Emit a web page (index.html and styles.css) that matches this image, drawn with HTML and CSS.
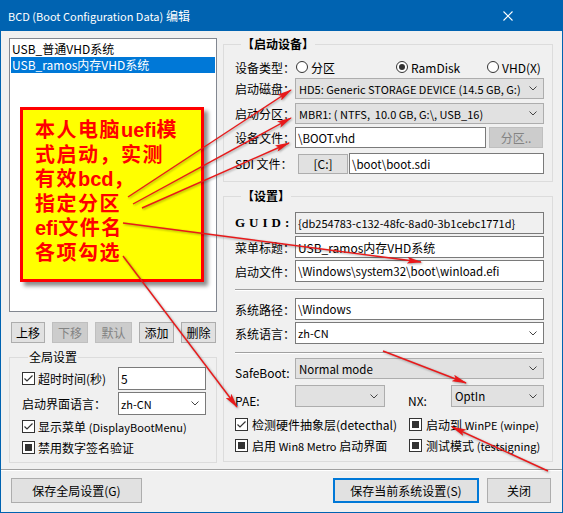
FILE: index.html
```html
<!DOCTYPE html>
<html>
<head>
<meta charset="utf-8">
<title>BCD</title>
<link rel="stylesheet" href="styles.css">
</head>
<body>
<div class="window">
  <div class="titlebar">
    <span class="title"><span class="en">BCD (Boot Configuration Data)</span> 编辑</span>
    <svg class="close" width="10" height="10" viewBox="0 0 10 10"><path d="M0.5 0.5L9.5 9.5M9.5 0.5L0.5 9.5" stroke="#fff" stroke-width="1.1"/></svg>
  </div>
  <div class="client">
    <div class="main">
      <div class="leftcol">
        <div class="listbox">
          <div class="item">USB_普通VHD系统</div>
          <div class="item sel">USB_ramos内存VHD系统</div>
        </div>
        <div class="btnrow">
          <div class="btn b1">上移</div>
          <div class="btn dis b2">下移</div>
          <div class="btn dis b3">默认</div>
          <div class="btn b4">添加</div>
          <div class="btn b5">删除</div>
        </div>
        <fieldset class="group gglobal">
          <legend>全局设置</legend>
          <div class="row gr1">
            <div class="glbl"><span class="chk on"><svg width="11" height="11" viewBox="0 0 11 11"><path d="M1.5 5.5L4 8L9.5 2.5" stroke="#333" stroke-width="1.2" fill="none"/></svg></span><span>超时时间(秒)</span></div>
            <div class="tb fill">5</div>
          </div>
          <div class="row gr2">
            <div class="glbl lbltext">启动界面语言：</div>
            <div class="combo ed fill"><span class="en">zh-CN</span><svg class="chev" width="8" height="5" viewBox="0 0 8 5"><polyline points="0.5,0.5 4,4 7.5,0.5" stroke="#444" fill="none"/></svg></div>
          </div>
          <div class="row gr3">
            <span class="chk on"><svg width="11" height="11" viewBox="0 0 11 11"><path d="M1.5 5.5L4 8L9.5 2.5" stroke="#333" stroke-width="1.2" fill="none"/></svg></span><span>显示菜单 <span class="en">(DisplayBootMenu)</span></span>
          </div>
          <div class="row gr4">
            <span class="chk ind"><i></i></span><span>禁用数字签名验证</span>
          </div>
        </fieldset>
      </div>
      <div class="rightcol">
        <fieldset class="group g1">
          <legend class="bold">【启动设备】</legend>
          <div class="row r-radio">
            <span class="lbl">设备类型：</span>
            <div class="radios">
              <div class="ritem ri1"><span class="radio"></span><span>分区</span></div>
              <div class="ritem ri2"><span class="radio sel"><i></i></span><span>RamDisk</span></div>
              <div class="ritem"><span class="radio"></span><span>VHD(X)</span></div>
            </div>
          </div>
          <div class="row r-c1">
            <span class="lbl">启动磁盘：</span>
            <div class="combo ro fill"><span class="en">HD5: Generic STORAGE DEVICE (14.5 GB, G:)</span><svg class="chev" width="8" height="5" viewBox="0 0 8 5"><polyline points="0.5,0.5 4,4 7.5,0.5" stroke="#444" fill="none"/></svg></div>
          </div>
          <div class="row r-c2">
            <span class="lbl">启动分区：</span>
            <div class="combo ro fill"><span class="en">MBR1: ( NTFS,&nbsp; 10.0 GB, G:\, USB_16)</span><svg class="chev" width="8" height="5" viewBox="0 0 8 5"><polyline points="0.5,0.5 4,4 7.5,0.5" stroke="#444" fill="none"/></svg></div>
          </div>
          <div class="row r-f">
            <span class="lbl">设备文件：</span>
            <div class="tb vhd"><span class="en2">\BOOT.vhd</span></div>
            <div class="btn dis partbtn">分区..</div>
          </div>
          <div class="row r-sdi">
            <span class="lbl">SDI 文件：</span>
            <div class="btn cbtn">[C:]</div>
            <div class="tb fill"><span class="en2">\boot\boot.sdi</span></div>
          </div>
        </fieldset>
        <fieldset class="group g2">
          <legend class="bold">【设置】</legend>
          <div class="row s-guid">
            <span class="lbl guid">GUID:</span>
            <div class="tb ro fill"><span class="en">{db254783-c132-48fc-8ad0-3b1cebc1771d}</span></div>
          </div>
          <div class="row s-2">
            <span class="lbl">菜单标题：</span>
            <div class="tb fill">USB_ramos内存VHD系统</div>
          </div>
          <div class="row s-2">
            <span class="lbl">启动文件：</span>
            <div class="tb fill"><span class="en2">\Windows\system32\boot\winload.efi</span></div>
          </div>
          <div class="hsep s-sep1"></div>
          <div class="row s-path">
            <span class="lbl">系统路径：</span>
            <div class="tb fill"><span class="en2">\Windows</span></div>
          </div>
          <div class="row s-2">
            <span class="lbl">系统语言：</span>
            <div class="combo ed fill tall"><span class="en">zh-CN</span><svg class="chev" width="8" height="5" viewBox="0 0 8 5"><polyline points="0.5,0.5 4,4 7.5,0.5" stroke="#444" fill="none"/></svg></div>
          </div>
          <div class="hsep s-sep2"></div>
          <div class="row s-safe">
            <span class="lbl low">SafeBoot:</span>
            <div class="combo ro fill"><span class="en2">Normal mode</span><svg class="chev" width="8" height="5" viewBox="0 0 8 5"><polyline points="0.5,0.5 4,4 7.5,0.5" stroke="#444" fill="none"/></svg></div>
          </div>
          <div class="row s-pae">
            <span class="lbl low">PAE:</span>
            <div class="combo ro tall pae"><span></span><svg class="chev" width="8" height="5" viewBox="0 0 8 5"><polyline points="0.5,0.5 4,4 7.5,0.5" stroke="#444" fill="none"/></svg></div>
            <span class="nxlbl low">NX:</span>
            <div class="combo ro tall fill"><span class="en2">OptIn</span><svg class="chev" width="8" height="5" viewBox="0 0 8 5"><polyline points="0.5,0.5 4,4 7.5,0.5" stroke="#444" fill="none"/></svg></div>
          </div>
          <div class="row s-chk1">
            <div class="ccol"><span class="chk on"><svg width="11" height="11" viewBox="0 0 11 11"><path d="M1.5 5.5L4 8L9.5 2.5" stroke="#333" stroke-width="1.2" fill="none"/></svg></span><span>检测硬件抽象层(detecthal)</span></div>
            <div class="ccol2"><span class="chk ind"><i></i></span><span>启动到 <span class="en">WinPE (winpe)</span></span></div>
          </div>
          <div class="row s-chk2">
            <div class="ccol"><span class="chk ind"><i></i></span><span>启用 <span class="en">Win8 Metro</span> 启动界面</span></div>
            <div class="ccol2"><span class="chk ind"><i></i></span><span>测试模式 <span class="en">(testsigning)</span></span></div>
          </div>
        </fieldset>
      </div>
    </div>
    <div class="sep"></div>
    <div class="bottom">
      <div class="btn bsave">保存全局设置(G)</div>
      <div class="spacer"></div>
      <div class="btn bdef">保存当前系统设置(S)</div>
      <div class="btn bclose">关闭</div>
    </div>
  </div>

  <div class="note">
    <div class="nl">本人电脑<span class="lat">uefi</span>模</div>
    <div class="nl">式启动，实测</div>
    <div class="nl">有效<span class="lat">bcd</span>，</div>
    <div class="nl">指定分区</div>
    <div class="nl"><span class="lat">efi</span>文件名</div>
    <div class="nl">各项勾选</div>
  </div>

  <svg class="arrows" width="563" height="513" viewBox="0 0 563 513">
    <defs>
      <marker id="ah" markerWidth="15" markerHeight="7" refX="14" refY="3.5" orient="auto" markerUnits="userSpaceOnUse">
        <path d="M0,0 L15,3.5 L0,7 L3,3.5 Z" fill="#e8191a"/>
      </marker>
    </defs>
    <g stroke="#e8191a" stroke-width="1.4" fill="none" marker-end="url(#ah)">
      <line x1="128" y1="197" x2="291" y2="90"/>
      <line x1="133" y1="204" x2="291" y2="118"/>
      <line x1="142" y1="208" x2="289" y2="143"/>
      <line x1="123" y1="223" x2="421" y2="262"/>
      <line x1="123" y1="256" x2="237" y2="407"/>
      <line x1="383" y1="351" x2="466" y2="383"/>
      <line x1="548" y1="471" x2="452" y2="427"/>
    </g>
  </svg>
</div>
</body>
</html>
```

FILE: styles.css
```css
* { box-sizing: border-box; }
html, body { margin: 0; padding: 0; }
body {
  width: 563px;
  height: 513px;
  overflow: hidden;
  background: #f0f0f0;
  font-family: "Noto Sans CJK SC", "Noto Sans", sans-serif;
  font-size: 12px;
  color: #000;
}
.en { font-size: 11px; }
.en2 { font-size: 11.5px; }
.window {
  position: relative;
  width: 563px;
  height: 513px;
  display: flex;
  flex-direction: column;
}
.titlebar {
  flex: none;
  height: 31px;
  background: #0063b1;
  color: #fff;
  display: flex;
  align-items: center;
  padding-left: 8px;
}
.title { flex: 1; line-height: 16px; white-space: nowrap; }
.close { margin-right: 50px; }

.client {
  flex: 1;
  background: #f0f0f0;
  border: 1px solid #0063b1;
  border-top: 0;
  display: flex;
  flex-direction: column;
}
.main {
  display: flex;
  padding: 5px 0 0 8px;
  gap: 6px;
  align-items: flex-start;
}
.leftcol { width: 208px; display: flex; flex-direction: column; }
.rightcol { width: 330px; display: flex; flex-direction: column; }

.listbox {
  margin-top: 2px;
  height: 274px;
  background: #fff;
  border: 1px solid #828790;
  padding: 2px 1px;
}
.item { height: 16px; line-height: 16px; padding-left: 1px; white-space: nowrap; }
.item.sel { background: #0078d7; color: #fff; }

.btn {
  display: flex;
  align-items: center;
  justify-content: center;
  background: #e1e1e1;
  border: 1px solid #adadad;
  white-space: nowrap;
  flex: none;
}
.btn.dis { background: #cccccc; border-color: #bfbfbf; color: #838383; }

.btnrow {
  margin-top: 10px;
  display: flex;
  padding-left: 2px;
  gap: 7px;
}
.btnrow .btn { height: 21px; }
.b1 { width: 34px; }
.b2 { width: 36px; }
.b3 { width: 37px; }
.b4 { width: 35px; }
.b5 { width: 35px; }

.group {
  margin: 0;
  padding: 0;
  border: 1px solid #dcdcdc;
  min-width: 0;
}
.group legend {
  margin-left: 6px;
  padding: 0 1px;
  height: 16px;
  line-height: 16px;
  white-space: nowrap;
}
.bold { font-weight: 700; }

.row { display: flex; align-items: center; }
.fill { flex: 1; min-width: 0; }

/* global group */
.gglobal { margin-top: 6px; padding: 0 10px 5px 12px; }
.gr1 { margin-top: 2px; height: 23px; }
.gr2 { margin-top: 2px; height: 23px; }
.gr3 { margin-top: 1px; height: 20px; }
.gr4 { margin-top: 1px; height: 20px; }
.glbl { width: 96px; flex: none; display: flex; align-items: center; white-space: nowrap; }
.gr1 .tb, .gr2 .combo { height: 23px; }

/* checkbox / radio */
.chk {
  width: 13px;
  height: 13px;
  flex: none;
  border: 1px solid #333;
  background: #fff;
  margin-right: 3px;
  display: flex;
  align-items: center;
  justify-content: center;
}
.chk.ind i { display: block; width: 7px; height: 7px; background: #333; }
.radio {
  width: 12px;
  height: 12px;
  flex: none;
  border: 1px solid #333;
  border-radius: 50%;
  background: #fff;
  margin-right: 3px;
  display: flex;
  align-items: center;
  justify-content: center;
}
.radio.sel i { display: block; width: 6px; height: 6px; border-radius: 50%; background: #333; }

/* textbox & combo */
.tb {
  height: 22px;
  background: #fff;
  border: 1px solid #7a7a7a;
  padding-left: 2px;
  display: flex;
  align-items: center;
  white-space: nowrap;
  overflow: hidden;
}
.tb.ro { background: #f0f0f0; }
.combo {
  height: 21px;
  display: flex;
  align-items: center;
  justify-content: space-between;
  padding-left: 3px;
  white-space: nowrap;
  overflow: hidden;
}
.combo.tall { height: 22px; }
.combo.ro { background: #e1e1e1; border: 1px solid #adadad; }
.combo.ed { background: #fff; border: 1px solid #7a7a7a; padding-left: 2px; }
.chev { flex: none; margin-right: 6px; }

/* group 1 */
.g1 { padding: 0 8px 7px 11px; }
.lbl { width: 60px; flex: none; white-space: nowrap; }
.r-radio { margin-top: 5px; height: 20px; }
.radios { display: flex; align-items: center; margin-left: 1px; flex: 1; }
.ritem { display: flex; align-items: center; white-space: nowrap; }
.ri1 { width: 100px; }
.ri2 { width: 91px; }
.r-c1 { margin-top: 1px; height: 21px; }
.r-c2 { margin-top: 4px; height: 21px; }
.r-f { margin-top: 3px; height: 21px; }
.r-f .tb { height: 21px; width: 191px; flex: none; }
.partbtn { width: 54px; height: 21px; margin-left: 3px; }
.r-sdi { margin-top: 5px; height: 21px; }
.cbtn { width: 50px; height: 20px; margin-left: 3px; margin-right: 1px; }
.r-sdi .tb { height: 21px; }

/* group 2 */
.g2 { margin-top: 6px; padding: 0 8px 6px 11px; }
.s-guid { margin-top: 8px; height: 22px; }
.guid {
  font-family: "Liberation Serif", serif;
  font-weight: 700;
  font-size: 13px;
  letter-spacing: 4px;
}
.s-2 { margin-top: 2px; height: 22px; }
.hsep { height: 2px; border-top: 1px solid #a0a0a0; border-bottom: 1px solid #fff; margin-right: 2px; }
.s-sep1 { margin-top: 7px; }
.s-path { margin-top: 7px; height: 22px; }
.s-sep2 { margin-top: 8px; }
.s-safe { margin-top: 4px; height: 21px; }
.s-pae { margin-top: 6px; height: 22px; }
.low { position: relative; top: 4px; }
.pae { width: 90px; flex: none; }
.nxlbl { width: 43px; flex: none; margin-left: 23px; }
.s-chk1 { margin-top: 7px; height: 20px; }
.s-chk2 { margin-top: 1px; height: 20px; }
.ccol { width: 174px; flex: none; display: flex; align-items: center; white-space: nowrap; }
.ccol2 { display: flex; align-items: center; white-space: nowrap; }
.ccol .chk, .ccol2 .chk { margin-right: 4px; }

/* bottom */
.sep { margin-top: 6px; height: 2px; border-top: 1px solid #a0a0a0; border-bottom: 1px solid #fff; }
.bottom { margin-top: 7px; display: flex; padding: 0 11px 0 10px; gap: 8px; }
.bottom .btn { height: 25px; }
.bsave { width: 131px; }
.spacer { flex: 1; }
.bdef { width: 146px; border: 2px solid #0078d7; }
.bclose { width: 64px; }

/* annotation */
.note {
  position: absolute;
  left: 20px;
  top: 107px;
  width: 184px;
  height: 175px;
  background: #ffff00;
  border: 3px solid #ff0000;
  box-shadow: 4px 4px 4px rgba(0, 0, 0, 0.45);
  padding: 7px 0 0 12px;
  color: #ff0000;
  font-family: "Noto Sans CJK SC", sans-serif;
  font-weight: 700;
  font-size: 20px;
  line-height: 24px;
  letter-spacing: 1.5px;
  white-space: nowrap;
}
.lat {
  font-family: "Liberation Sans", sans-serif;
  font-weight: 700;
  letter-spacing: 0;
}
.arrows {
  position: absolute;
  left: 0;
  top: 0;
  pointer-events: none;
  filter: drop-shadow(1px 1px 1px rgba(0, 0, 0, 0.35));
}
```
